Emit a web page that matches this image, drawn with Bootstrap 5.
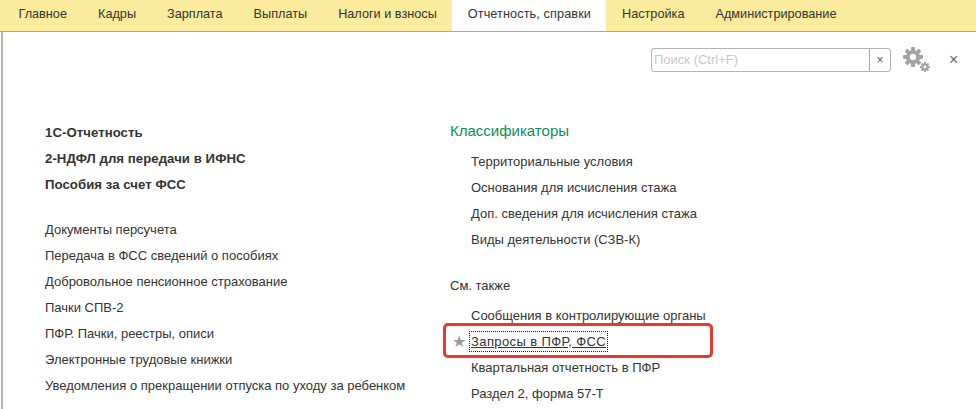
<!DOCTYPE html>
<html lang="ru">
<head>
<meta charset="utf-8">
<title>Отчетность, справки</title>
<link href="https://cdn.jsdelivr.net/npm/bootstrap@5.3.0/dist/css/bootstrap.min.css" rel="stylesheet">
<style>
html,body{height:409px;overflow:hidden;background:#fff}
body{font-family:"Liberation Sans",Arial,sans-serif;font-size:13px;color:#333;line-height:16px;position:relative}
.topbar{height:32px;background:#fbeb9c;border-bottom:1px solid #a6a6a6;padding-left:3px;flex-wrap:nowrap}
.tabitem{height:31px;line-height:28px;padding:0 15.5px;color:#333;text-decoration:none;white-space:nowrap;font-size:12.7px}
.tabitem.on{background:#fff;height:31px;letter-spacing:.1px}
.workarea{border-left:2px solid #b5b5a8;margin-left:1px;height:377px;position:relative}
.searchrow{padding:16px 0 0 648px;height:86px}
.searchbox{width:240px;flex:none;height:24px;border:1px solid #b3b3b3;border-radius:3px;color:#c8c8c8;font-size:13px;line-height:22px;padding-left:2px}
.searchtext{flex:1 1 auto}
.searchclear{width:21px;border-left:1px solid #a6a6a6;color:#555;text-align:center;font-size:12px}
.gearbtn{margin-left:11px;margin-top:-1px;flex:none}
.closebtn{margin-left:19px;color:#666;font-size:16px;line-height:24px;flex:none}
.cols{padding-left:42px}
.leftcol{width:405px;padding-top:2px}
.rightcol{width:400px}
.lnk{height:26px;line-height:26px;white-space:nowrap;color:#333}
.lnk.strong{font-weight:700;font-size:13.2px;letter-spacing:.05px}
.lnk.sub{padding-left:21px}
.gap1{height:19px}
.grouptitle{color:#0a8f55;font-size:15px;height:26px;line-height:26px;margin-bottom:5px}
.seealso{height:26px;line-height:26px;margin-top:20px;margin-bottom:4px}
.favrow{position:relative}
.favstar{position:absolute;left:2px;top:0;color:#999;font-size:16px;line-height:25px}
.focuslnk{display:inline-block;line-height:17px;outline:1px dotted #222;outline-offset:1px;text-decoration:underline;color:#333;letter-spacing:.4px}
.redmark{position:absolute;left:440px;top:291px;width:270px;height:35px;border:3px solid #e53a30;border-radius:5px}
</style>
</head>
<body>
<nav class="topbar d-flex">
  <a class="tabitem" href="#">Главное</a>
  <a class="tabitem" href="#">Кадры</a>
  <a class="tabitem" href="#">Зарплата</a>
  <a class="tabitem" href="#">Выплаты</a>
  <a class="tabitem" href="#">Налоги и взносы</a>
  <a class="tabitem on" href="#">Отчетность, справки</a>
  <a class="tabitem" href="#">Настройка</a>
  <a class="tabitem" href="#">Администрирование</a>
</nav>
<main class="workarea">
  <div class="searchrow d-flex align-items-start">
    <div class="searchbox d-flex">
      <div class="searchtext">Поиск (Ctrl+F)</div>
      <div class="searchclear">×</div>
    </div>
    <svg class="gearbtn" width="28" height="26" viewBox="0 0 28 26" aria-hidden="true">
      <g fill="#a3a3a3">
        <circle cx="11" cy="10" r="7"/>
        <rect x="9" y="0" width="4" height="20" rx="1"/><rect x="9" y="0" width="4" height="20" rx="1" transform="rotate(45 11 10)"/><rect x="9" y="0" width="4" height="20" rx="1" transform="rotate(90 11 10)"/><rect x="9" y="0" width="4" height="20" rx="1" transform="rotate(135 11 10)"/>
        <circle cx="23" cy="20" r="3.4"/>
        <rect x="22" y="15" width="2" height="10"/><rect x="18" y="19" width="10" height="2"/>
        <rect x="22" y="15" width="2" height="10" transform="rotate(45 23 20)"/><rect x="22" y="15" width="2" height="10" transform="rotate(135 23 20)"/>
      </g>
      <circle cx="11" cy="10" r="3.2" fill="#fff"/>
      <circle cx="23" cy="20" r="1.4" fill="#fff"/>
    </svg>
    <div class="closebtn">×</div>
  </div>
  <div class="cols d-flex">
    <div class="leftcol">
      <div class="lnk strong">1С-Отчетность</div>
      <div class="lnk strong">2-НДФЛ для передачи в ИФНС</div>
      <div class="lnk strong">Пособия за счет ФСС</div>
      <div class="gap1"></div>
      <div class="lnk">Документы персучета</div>
      <div class="lnk">Передача в ФСС сведений о пособиях</div>
      <div class="lnk">Добровольное пенсионное страхование</div>
      <div class="lnk">Пачки СПВ-2</div>
      <div class="lnk">ПФР. Пачки, реестры, описи</div>
      <div class="lnk">Электронные трудовые книжки</div>
      <div class="lnk">Уведомления о прекращении отпуска по уходу за ребенком</div>
    </div>
    <div class="rightcol">
      <div class="grouptitle">Классификаторы</div>
      <div class="lnk sub">Территориальные условия</div>
      <div class="lnk sub">Основания для исчисления стажа</div>
      <div class="lnk sub">Доп. сведения для исчисления стажа</div>
      <div class="lnk sub">Виды деятельности (СЗВ-К)</div>
      <div class="seealso">См. также</div>
      <div class="lnk sub">Сообщения в контролирующие органы</div>
      <div class="lnk sub favrow"><span class="favstar">★</span><span class="focuslnk">Запросы в ПФР, ФСС</span></div>
      <div class="lnk sub">Квартальная отчетность в ПФР</div>
      <div class="lnk sub">Раздел 2, форма 57-Т</div>
    </div>
  </div>
  <div class="redmark"></div>
</main>
</body>
</html>
